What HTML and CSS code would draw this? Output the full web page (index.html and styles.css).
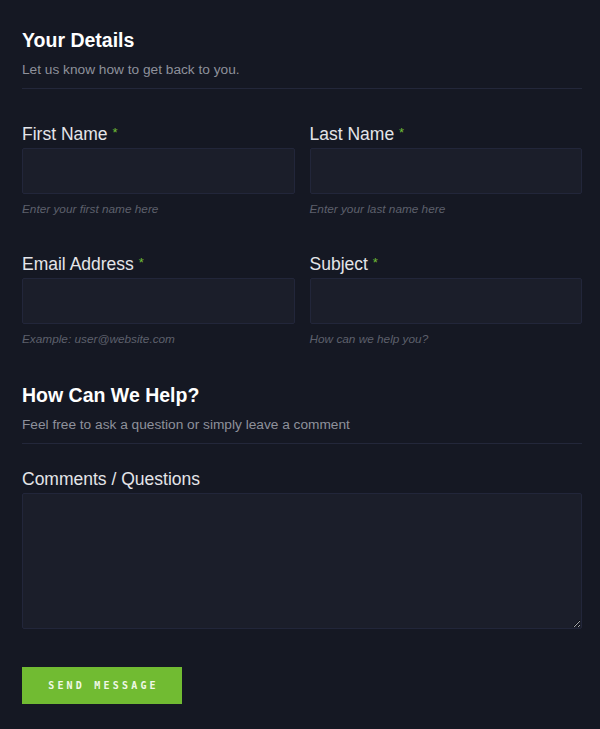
FILE: index.html
```html
<!DOCTYPE html>
<html lang="en">
<head>
  <meta charset="UTF-8" />
  <title>Contact</title>
  <link rel="stylesheet" href="styles.css">
</head>
<body>
  <form id="contact" class="contact-form">
    <div class="section-head">
      <h2>Your Details</h2>
      <p>Let us know how to get back to you.</p>
    </div>

    <div class="row">
      <div class="field">
        <label for="first">First Name <span class="req">*</span></label>
        <input type="text" id="first" name="first">
        <small>Enter your first name here</small>
      </div>
      <div class="field">
        <label for="last">Last Name <span class="req">*</span></label>
        <input type="text" id="last" name="last">
        <small>Enter your last name here</small>
      </div>
    </div>

    <div class="row">
      <div class="field">
        <label for="email">Email Address <span class="req">*</span></label>
        <input type="text" id="email" name="email">
        <small>Example: user@website.com</small>
      </div>
      <div class="field">
        <label for="subject">Subject <span class="req">*</span></label>
        <input type="text" id="subject" name="subject">
        <small>How can we help you?</small>
      </div>
    </div>

    <div class="section-head help">
      <h2>How Can We Help?</h2>
      <p>Feel free to ask a question or simply leave a comment</p>
    </div>

    <div class="field full">
      <label for="comments">Comments / Questions</label>
      <textarea id="comments" name="comments"></textarea>
    </div>

    <button type="submit" id="button">Send Message</button>
  </form>
</body>
</html>
```

FILE: styles.css
```css
body {
  font-family: "Liberation Sans", Arial, Helvetica, sans-serif;
  background-color: #151823;
  margin: 0;
  padding: 0;
}

.contact-form {
  padding: 28px 18px 24px 22px;
  display: flex;
  flex-direction: column;
}

.section-head {
  border-bottom: 1px solid #23273a;
  padding-bottom: 10px;
  margin-bottom: 34px;
}

.section-head h2 {
  font-size: 19.5px;
  font-weight: bold;
  color: #fff;
  margin: 0 0 10px 0;
  line-height: 24px;
}

.section-head p {
  font-size: 13.7px;
  color: #8e919b;
  margin: 0;
  line-height: 16px;
}

.section-head.help {
  margin-bottom: 25px;
}

.row {
  display: grid;
  grid-template-columns: 1fr 1fr;
  gap: 15px;
  margin-bottom: 37px;
}

.field {
  display: flex;
  flex-direction: column;
}

label {
  font-size: 17.5px;
  color: #e4e5e9;
  line-height: 20px;
  margin-bottom: 4px;
}

.req {
  color: #6fbd35;
  font-size: 13px;
  vertical-align: 3px;
}

input[type="text"],
textarea {
  background-color: #1b1e2a;
  border: 1px solid #22263a;
  border-radius: 2px;
  height: 46px;
  box-sizing: border-box;
  color: #ddd;
  font-size: 15px;
  padding: 8px 12px;
  margin: 0;
}

textarea {
  height: 136px;
  resize: vertical;
}

small {
  font-size: 11.8px;
  font-style: italic;
  color: #5d606c;
  margin-top: 8px;
  line-height: 14px;
}

.field.full {
  margin-bottom: 38px;
}

#button {
  align-self: flex-start;
  width: 160px;
  height: 37px;
  background-color: #71bb32;
  color: #f0f8e6;
  border: none;
  border-radius: 0;
  font-family: "DejaVu Sans Mono", "Liberation Mono", monospace;
  font-weight: bold;
  font-size: 10px;
  letter-spacing: 3.2px;
  text-transform: uppercase;
  cursor: pointer;
  padding: 0 0 0 3px;
}
```
